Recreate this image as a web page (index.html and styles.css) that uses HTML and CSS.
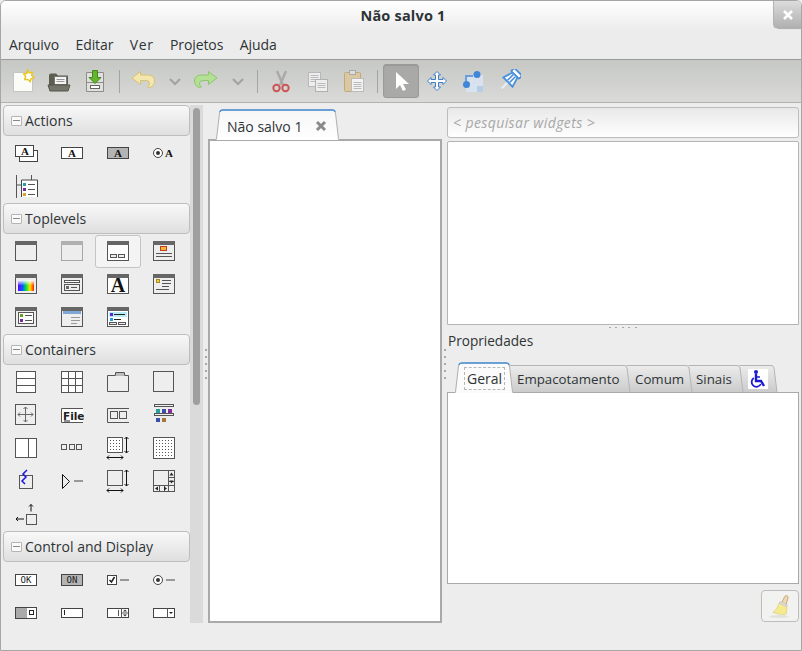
FILE: index.html
```html
<!DOCTYPE html>
<html lang="pt">
<head>
  <meta charset="UTF-8" />
  <title>Não salvo 1</title>
  <link rel="stylesheet" href="styles.css">
</head>
<body>
<div class="window">
  <div class="titlebar">
    <span class="title">Não salvo 1</span>
    <span class="win-close">
      <svg width="12" height="12" viewBox="0 0 12 12"><path d="M2 2l8 8M10 2l-8 8" class="x-white"/></svg>
    </span>
  </div>
  <div class="menubar">
    <span>Arquivo</span><span>Editar</span><span>Ver</span><span>Projetos</span><span>Ajuda</span>
  </div>

  <div class="toolbar">
    <span class="tool"><svg width="24" height="24"><path d="M2.500 3.500h15l4 4v15h-19z" fill="#fbfbf8" stroke="#c4c4c0"/><path d="M16.500 1l1.600 2.800 3.200-.4-.6 3.100 2.300 2-2.900 1.200-1 3-2.200-2.300-3.100.1.800-3-1.800-2.600 3.200-.6z" fill="#fff" stroke="#e8c820" stroke-width="1.500"/></svg></span>
    <span class="tool"><svg width="24" height="24"><path d="M2 6.500q0-2 2-2h5l2 2h10v13h-19z" fill="#5d5d50"/><rect x="7.500" y="7.500" width="12" height="8" fill="#f4f4f0" stroke="#777"/><path d="M9.500 10.500h8M9.500 12.500h8" stroke="#999"/><path d="M1 16h22l-2 6h-18z" fill="#74746a" stroke="#55554a"/></svg></span>
    <span class="tool"><svg width="24" height="24"><path d="M3.500 3.500h17v19h-17z" fill="#e0e0dc" stroke="#8c8c88"/><path d="M3.500 13.500h17" stroke="#8c8c88"/><rect x="7.500" y="16.500" width="9" height="3" fill="#fff" stroke="#666"/><path d="M9.500 1.500h5v7h3.500l-6 6-6-6h3.500z" fill="#66b530" stroke="#3f8a18"/></svg></span>
    <i class="sep"></i>
    <span class="tool"><svg width="24" height="24"><path d="M9.500 2.500l-8.500 6.500 8.500 6.500v-4h5.500q3.500 0 3.500 3 0 2-2 3.500l2 .5q5-1.500 5-6.500 0-6-7.500-6h-6.500z" fill="#f3e6ae" stroke="#d8c26e"/></svg></span>
    <span class="tool tool-small"><svg width="14" height="9"><path d="M2 2l5 5 5-5" class="chev"/></svg></span>
    <span class="tool"><svg width="24" height="24"><path d="M14.500 2.500l8.500 6.500-8.500 6.500v-4h-5.500q-3.500 0-3.500 3 0 2 2 3.500l-2 .5q-5-1.500-5-6.500 0-6 7.500-6h6.500z" fill="#b4e096" stroke="#8cc66c"/></svg></span>
    <span class="tool tool-small"><svg width="14" height="9"><path d="M2 2l5 5 5-5" class="chev"/></svg></span>
    <i class="sep"></i>
    <span class="tool"><svg width="24" height="24"><path d="M8 2l6 14M17 2l-6 14" stroke="#aaa" stroke-width="2.500" fill="none"/><circle cx="7.500" cy="19" r="3.200" fill="none" stroke="#cc5555" stroke-width="2"/><circle cx="16.500" cy="19" r="3.200" fill="none" stroke="#cc5555" stroke-width="2"/></svg></span>
    <span class="tool"><svg width="24" height="24"><rect x="3.500" y="3.500" width="12" height="14" fill="#eee" stroke="#b8b8b8"/><path d="M5.500 6.500h8M5.500 8.500h8M5.500 10.500h8M5.500 12.500h8" stroke="#bbb"/><rect x="10.500" y="10.500" width="12" height="12" fill="#eee" stroke="#b0b0b0"/><path d="M12.500 14.500h8M12.500 16.500h8M12.500 18.500h8" stroke="#bbb"/></svg></span>
    <span class="tool"><svg width="24" height="24"><rect x="3.500" y="3.500" width="16" height="19" rx="1" fill="#dcc8a0" stroke="#c4a878"/><rect x="8.500" y="1.500" width="6" height="4" fill="#ddd" stroke="#aaa"/><rect x="10.500" y="9.500" width="12" height="13" fill="#f2f2f2" stroke="#bbb"/><path d="M12.500 13.500h8M12.500 15.500h8M12.500 17.500h8M12.500 19.500h8" stroke="#bbb"/></svg></span>
    <i class="sep"></i>
    <span class="tool tool-on"><svg width="24" height="24"><path d="M7 3v17l4-4 3 6 3-1.500-3-5.500h6z" fill="#fff"/></svg></span>
    <span class="tool"><svg width="24" height="24"><path d="M12 2.500l3.500 3.500h-2v4.500h4.500v-2l3.500 3.500-3.500 3.500v-2h-4.500v4.500h2l-3.500 3.500-3.500-3.500h2v-4.500h-4.500v2l-3.500-3.500 3.500-3.500v2h4.500v-4.500h-2z" fill="#fff" stroke="#3f7fc8"/></svg></span>
    <span class="tool"><svg width="24" height="24"><rect x="5" y="6" width="17" height="17" fill="#d8e2ee"/><rect x="16" y="17" width="6" height="6" fill="#b6cde6"/><path d="M5 12v-5h7" fill="none" stroke="#6a9fdc" stroke-width="2"/><circle cx="16" cy="5.500" r="3.500" fill="#3f86d8"/><circle cx="5.500" cy="15.500" r="3.500" fill="#3f86d8"/></svg></span>
    <span class="tool"><svg width="24" height="24"><g transform="rotate(45 12 12)"><rect x="6.500" y="-1" width="11" height="4.500" rx="1" fill="#fff" stroke="#4a90dc" stroke-width="1.800"/><path d="M8.500 3.500h7l3 10h-13z" fill="#fff" stroke="#4a90dc" stroke-width="1.800"/><path d="M10.500 4.500v8M13.500 4.500v8" stroke="#4a90dc" stroke-width="1.600"/><path d="M12 14.500v8" stroke="#e6eef6" stroke-width="2"/></g></svg></span>
  </div>

  <div class="main">
    <div class="palette">
      <div class="palette-list">

        <div class="group-head"><b class="expander"></b>Actions</div>
        <div class="icons">
          <span><svg width="24" height="24"><rect x="5.500" y="9.500" width="18" height="11" class="box"/><rect x="1.500" y="4.500" width="18" height="11" class="box"/><text x="7" y="14" class="glyph">A</text></svg></span>
          <span><svg width="24" height="24"><rect x="1.500" y="6.500" width="21" height="11" class="box"/><text x="8" y="16" class="glyph">A</text></svg></span>
          <span><svg width="24" height="24"><rect x="1.500" y="6.500" width="21" height="11" class="box grey"/><text x="8" y="16" class="glyph">A</text></svg></span>
          <span><svg width="24" height="24"><circle cx="6" cy="12" r="4.500" class="box"/><circle cx="6" cy="12" r="2" fill="#333"/><text x="13" y="16" class="glyph">A</text></svg></span>
          <span><svg width="24" height="24"><path d="M2.500 1v23M2.500 11h5M17.500 1v5" class="line"/><path d="M7.500 23v-17h16v17" class="box"/><rect x="9" y="9" width="3" height="3" fill="#2a9d9d"/><rect x="9" y="14" width="3" height="3" fill="#7a2aa0"/><rect x="9" y="19" width="3" height="3" fill="#e0a020"/><path d="M14 10.500h7M14 15.500h7M14 20.500h7" class="line"/></svg></span>
        </div>

        <div class="group-head"><b class="expander"></b>Toplevels</div>
        <div class="icons">
          <span><svg width="24" height="24"><rect x="1.500" y="2.500" width="21" height="19" class="win"/><rect x="1" y="2" width="22" height="4" class="bar"/></svg></span>
          <span class="faded"><svg width="24" height="24"><rect x="1.500" y="2.500" width="21" height="19" class="win"/><rect x="1" y="2" width="22" height="4" class="bar"/></svg></span>
          <span class="picked"><svg width="24" height="24"><rect x="1.500" y="2.500" width="21" height="19" class="win white"/><rect x="1" y="2" width="22" height="4" class="bar"/><rect x="4.500" y="15.500" width="6" height="3" class="win"/><rect x="12.500" y="15.500" width="6" height="3" class="win"/></svg></span>
          <span><svg width="24" height="24"><rect x="1.500" y="2.500" width="21" height="19" class="win"/><rect x="1" y="2" width="22" height="4" class="bar"/><rect x="8.500" y="7.500" width="6" height="4" fill="#f2b632" stroke="#c23b22"/><path d="M4 14.500h16M4 17.500h16" class="line"/></svg></span>
          <span><svg width="24" height="24"><defs><linearGradient id="hue"><stop offset="0" stop-color="#6600ff"/><stop offset=".3" stop-color="#0060ff"/><stop offset=".5" stop-color="#00e040"/><stop offset=".75" stop-color="#ffe000"/><stop offset="1" stop-color="#ff2000"/></linearGradient><linearGradient id="fade" x2="0" y2="1"><stop offset="0" stop-color="#fff"/><stop offset=".5" stop-color="#fff" stop-opacity="0"/></linearGradient></defs><rect x="1.500" y="2.500" width="21" height="19" class="win"/><rect x="1" y="2" width="22" height="4" class="bar"/><rect x="4" y="8" width="16" height="11" fill="url(#hue)"/><rect x="4" y="8" width="16" height="11" fill="url(#fade)"/></svg></span>
          <span><svg width="24" height="24"><rect x="1.500" y="2.500" width="21" height="19" class="win"/><rect x="1" y="2" width="22" height="4" class="bar"/><rect x="4.500" y="8.500" width="15" height="2" class="win white"/><rect x="4.500" y="12.500" width="15" height="6" class="win"/><rect x="6" y="14" width="3" height="3" fill="#666"/><path d="M11 15.500h6" class="line"/></svg></span>
          <span><svg width="24" height="24"><rect x="1.500" y="2.500" width="21" height="19" class="win white"/><rect x="1" y="2" width="22" height="4" class="bar"/><text x="12" y="20" class="glyph big">A</text></svg></span>
          <span><svg width="24" height="24"><rect x="1.500" y="2.500" width="21" height="19" class="win"/><rect x="1" y="2" width="22" height="4" class="bar"/><rect x="4.500" y="7.500" width="3" height="3" fill="#f2d232" stroke="#a88820"/><path d="M10 8.500h9M10 11.500h9M10 14.500h7M4 17.500h13" class="line"/></svg></span>
          <span><svg width="24" height="24"><rect x="1.500" y="2.500" width="21" height="19" class="win"/><rect x="1" y="2" width="22" height="4" class="bar"/><rect x="4.500" y="7.500" width="15" height="11" class="win white"/><rect x="6" y="9" width="3" height="3" fill="#6aa020"/><rect x="6" y="14" width="3" height="3" fill="#7a2aa0"/><path d="M11 10.500h7M11 15.500h7" class="line"/></svg></span>
          <span><svg width="24" height="24"><rect x="1.500" y="2.500" width="21" height="19" class="win"/><rect x="1" y="2" width="22" height="4" class="bar"/><rect x="3" y="6" width="18" height="3" fill="#7fa6d6"/><path d="M11 12.500h9M11 15.500h9M11 18.500h6" stroke="#999"/></svg></span>
          <span><svg width="24" height="24"><rect x="1.500" y="2.500" width="21" height="19" class="win white"/><rect x="1" y="2" width="22" height="4" class="bar"/><rect x="3" y="7" width="18" height="5" fill="#b8ecf4"/><rect x="4" y="8" width="3" height="3" fill="#5a2ad0"/><rect x="4" y="13" width="3" height="3" fill="#20a0e0"/><path d="M8 9.500h11M8 14.500h7" stroke="#222"/><rect x="3.500" y="17.500" width="7" height="2" class="win"/><rect x="12.500" y="17.500" width="7" height="2" class="win"/></svg></span>
        </div>

        <div class="group-head"><b class="expander"></b>Containers</div>
        <div class="icons">
          <span><svg width="24" height="24"><rect x="2.500" y="1.500" width="19" height="21" class="win white"/><path d="M2 8.500h20M2 15.500h20" class="frame"/></svg></span>
          <span><svg width="24" height="24"><rect x="1.500" y="1.500" width="21" height="21" class="win white"/><path d="M1 8.500h22M1 15.500h22M8.500 1v22M15.500 1v22" class="frame"/></svg></span>
          <span><svg width="24" height="24"><path d="M1.500 21.500v-16h8v-3h9v3h4v16z" class="win"/><rect x="10" y="3" width="8" height="3" fill="#bbb"/></svg></span>
          <span><svg width="24" height="24"><rect x="1.500" y="1.500" width="20" height="20" class="win"/></svg></span>

          <span><svg width="24" height="24"><rect x="1.500" y="1.500" width="20" height="20" class="win"/><path d="M11.500 4v15M4 11.500h15M11.500 4l-2 2M11.500 4l2 2M11.500 19l-2-2M11.500 19l2-2M4 11.500l2-2M4 11.500l2 2M19 11.500l-2-2M19 11.500l-2 2" stroke="#666" fill="none"/></svg></span>
          <span><svg width="24" height="24"><path d="M23 5.500h-21.500v14h21.500" class="win white"/><text x="3" y="16.500" class="file">File</text><path d="M4 18h6" stroke="#222"/></svg></span>
          <span><svg width="24" height="24"><path d="M23 5.500h-21.500v14h21.500" class="win"/><rect x="4.500" y="8.500" width="7" height="7" class="win"/><rect x="13.500" y="8.500" width="7" height="7" class="win"/></svg></span>
          <span><svg width="24" height="24"><rect x="2.500" y="1.500" width="19" height="2" class="win"/><rect x="2.500" y="10.500" width="19" height="2" class="win"/><rect x="4" y="6" width="4" height="4" fill="#2a9d9d"/><rect x="10" y="6" width="4" height="4" fill="#3a50a8"/><rect x="16" y="6" width="4" height="4" fill="#8a2aa0"/><rect x="4" y="15" width="4" height="4" fill="#3a50a8"/><rect x="10" y="15" width="4" height="4" fill="#a07840"/></svg></span>

          <span><svg width="24" height="24"><rect x="1.500" y="2.500" width="21" height="19" class="win white"/><path d="M14.500 2v20" class="frame"/></svg></span>
          <span><svg width="24" height="24"><rect x="1.500" y="8.500" width="5" height="5" class="win"/><rect x="9.500" y="8.500" width="5" height="5" class="win"/><rect x="16.500" y="8.500" width="5" height="5" class="win"/></svg></span>
          <span><svg width="24" height="24"><rect x="1.500" y="1.500" width="15" height="15" class="win white"/><path d="M4 4.500h11M4 7.500h11M4 10.500h11M4 13.500h11" class="dots"/><path d="M20.500 1v16M20.500 1l-2 2M20.500 1l2 2M20.500 17l-2-2M20.500 17l2-2M1 21.500h16M1 21.500l2-2M1 21.500l2 2M17 21.500l-2-2M17 21.500l-2 2" class="arrow"/></svg></span>
          <span><svg width="24" height="24"><rect x="1.500" y="1.500" width="21" height="21" class="win white"/><path d="M4 4.500h17M4 7.500h17M4 10.500h17M4 13.500h17M4 16.500h17M4 19.500h17" class="dots"/></svg></span>

          <span><svg width="24" height="24"><rect x="5.500" y="6.500" width="13" height="13" class="win"/><path d="M13 1l-4 4 3 3-4 4 3 3" stroke="#1818e0" stroke-width="1.500" fill="none"/></svg></span>
          <span><svg width="24" height="24"><path d="M2.500 5.500l7 7-7 7z" class="arrow" fill="#fff"/><rect x="14" y="11" width="9" height="2" fill="#999"/></svg></span>
          <span><svg width="24" height="24"><rect x="1.500" y="1.500" width="15" height="15" class="win"/><path d="M20.500 1v16M20.500 1l-2 2M20.500 1l2 2M20.500 17l-2-2M20.500 17l2-2M1 21.500h16M1 21.500l2-2M1 21.500l2 2M17 21.500l-2-2M17 21.500l-2 2" class="arrow"/></svg></span>
          <span><svg width="24" height="24"><rect x="1.500" y="1.500" width="21" height="21" class="win"/><path d="M16.500 1v22M1 16.500h22M16.500 8.500h6M16.500 12.500h6M7.500 16.500v6M12.500 16.500v6" class="frame"/><path d="M19.500 3.500l-2 3h4zM19.500 14.500l-2-3h4zM3 19.500l3-2v4zM15 19.500l-3-2v4z" fill="#222"/></svg></span>

          <span><svg width="24" height="24"><rect x="12.500" y="12.500" width="10" height="10" class="win"/><path d="M17 9.500v-7M17 2.500l-2 2M17 2.500l2 2M10 17h-8M2 17l2-2M2 17l2 2" class="arrow"/></svg></span>
        </div>

        <div class="group-head"><b class="expander"></b>Control and Display</div>
        <div class="icons">
          <span><svg width="24" height="24"><rect x="1.500" y="7.500" width="21" height="11" class="box"/><text x="12" y="16" class="mono">OK</text></svg></span>
          <span><svg width="24" height="24"><rect x="1.500" y="7.500" width="21" height="11" class="box grey"/><text x="12" y="16" class="mono">ON</text></svg></span>
          <span><svg width="24" height="24"><rect x="1.500" y="8.500" width="9" height="9" class="box"/><path d="M3.500 13l2 2 3-5" stroke="#222" stroke-width="1.500" fill="none"/><rect x="14" y="12" width="9" height="2" fill="#999"/></svg></span>
          <span><svg width="24" height="24"><circle cx="6" cy="13" r="4.500" class="box"/><circle cx="6" cy="13" r="2" fill="#333"/><rect x="14" y="12" width="9" height="2" fill="#999"/></svg></span>

          <span><svg width="24" height="24"><rect x="1.500" y="7.500" width="21" height="11" class="box"/><rect x="2" y="8" width="11" height="10" fill="#aaa"/><rect x="15.500" y="10.500" width="4" height="4" fill="none" stroke="#222"/></svg></span>
          <span><svg width="24" height="24"><rect x="1.500" y="8.500" width="21" height="9" class="box"/><path d="M4.500 10v5" stroke="#222"/></svg></span>
          <span><svg width="24" height="24"><rect x="1.500" y="8.500" width="21" height="9" class="box"/><path d="M12.500 10v6M15.500 8v10M15.500 13h7" class="frame"/><path d="M19 9.500l-2 2h4zM19 16.500l-2-2h4z" fill="#333"/></svg></span>
          <span><svg width="24" height="24"><rect x="1.500" y="8.500" width="21" height="9" class="box"/><path d="M15.500 8v10" class="frame"/><path d="M17 12h4l-2 2z" fill="#222"/></svg></span>
        </div>
      </div>
      <div class="scrollbar"><i></i></div>
    </div>

    <div class="grip-col"><i class="grip"></i></div>

    <div class="editor">
      <div class="doc-tabs">
        <span class="doc-tab">
          <svg class="tab-shape" width="123" height="31"><defs><linearGradient id="tabOn" x2="0" y2="1"><stop offset="0" stop-color="#f6f6f6"/><stop offset="1" stop-color="#fff"/></linearGradient></defs><path d="M.5 31l3-27q.3-3 3-3h110q2.700 0 3 3l3 27" fill="url(#tabOn)"/><path d="M.5 30l3-26q.3-3 3-3h110q2.700 0 3 3l3 26" fill="none" stroke="#b0b0b0"/><path d="M4 3q.3-2 2.500-2h110q2.200 0 2.500 2" fill="none" stroke="#4a90d9" stroke-width="1.500"/></svg>
          <span class="tab-label">Não salvo 1</span>
          <svg class="tab-x" width="12" height="12" viewBox="0 0 12 12"><path d="M2 2l8 8M10 2l-8 8" stroke="#8a8a8a" stroke-width="3"/></svg>
        </span>
      </div>
      <div class="canvas"></div>
    </div>

    <div class="grip-col"><i class="grip"></i></div>

    <div class="side">
      <div class="search">&lt; pesquisar widgets &gt;</div>
      <div class="tree"></div>
      <div class="grip-row"><i></i></div>
      <div class="props-label">Propriedades</div>
      <div class="prop-tabs">
        <span class="prop-tab prop-tab-on geral">
          <svg class="tab-shape" width="58" height="31"><path d="M.5 31l3-27q.4-3 3-3h45q2.600 0 3 3l3 27" fill="#fbfbfb"/><path d="M.5 30l3-26q.4-3 3-3h45q2.600 0 3 3l3 26" fill="none" stroke="#b0b0b0"/><path d="M4 3q.4-2 2.500-2h45q2.100 0 2.500 2" fill="none" stroke="#4a90d9" stroke-width="1.500"/></svg>
          <span class="tab-label focus">Geral</span>
        </span>
        <span class="prop-tab empacotamento">
          <svg class="tab-shape" width="117" height="27"><defs><linearGradient id="tabOff" x2="0" y2="1"><stop offset="0" stop-color="#ececec"/><stop offset="1" stop-color="#cbcbcb"/></linearGradient></defs><path d="M-3.500 .5h114.500q2.500 0 3 2.500l3 24h-117z" fill="url(#tabOff)"/><path d="M-3.500 .5h114.500q2.500 0 3 2.500l3 24" fill="none" stroke="#b4b4b4"/></svg>
          <span class="tab-label">Empacotamento</span>
        </span>
        <span class="prop-tab comum">
          <svg class="tab-shape" width="62" height="27"><path d="M-3.500 .5h59.500q2.500 0 3 2.500l3 24h-62z" fill="url(#tabOff)"/><path d="M-3.500 .5h59.500q2.500 0 3 2.500l3 24" fill="none" stroke="#b4b4b4"/></svg>
          <span class="tab-label">Comum</span>
        </span>
        <span class="prop-tab sinais">
          <svg class="tab-shape" width="51" height="27"><path d="M-3.500 .5h48.500q2.500 0 3 2.500l3 24h-51z" fill="url(#tabOff)"/><path d="M-3.500 .5h48.500q2.500 0 3 2.500l3 24" fill="none" stroke="#b4b4b4"/></svg>
          <span class="tab-label">Sinais</span>
        </span>
        <span class="prop-tab access">
          <svg class="tab-shape" width="34" height="27"><path d="M-3.500 .5h31.500q2.500 0 3 2.500l3 24h-34z" fill="url(#tabOff)"/><path d="M-3.500 .5h31.500q2.500 0 3 2.500l3 24" fill="none" stroke="#b4b4b4"/></svg>
          <svg class="a11y" width="20" height="20"><rect width="20" height="20" fill="#fff"/><circle cx="8" cy="3" r="2" fill="#1a1ad0"/><path d="M8 5v7h5l3 5" fill="none" stroke="#1a1ad0" stroke-width="2.400"/><path d="M5.800 9a4.800 4.800 0 1 0 7 6" fill="none" stroke="#1a1ad0" stroke-width="1.800"/><path d="M8 8h4" stroke="#1a1ad0" stroke-width="1.500"/></svg>
        </span>
      </div>
      <div class="prop-panel"></div>
      <div class="clear-row">
        <span class="clear-btn"><svg width="28" height="28"><ellipse cx="13" cy="24.500" rx="10" ry="1.500" fill="#e2e2dc"/><path d="M15 12l3.500-7q1-2 2.500-1.300t1 2.500l-2.500 7.500z" fill="#ecd9b8" stroke="#c8a87c"/><path d="M13.500 10.500l7 3.500q1 3-.5 8-1.500 1-3 .3l-1 .5-1-1-1.500 .8-1-1-1.500 .4-1-1-3-.4q4-3 6.500-10z" fill="#f6ea8e" stroke="#ddd17a" stroke-width=".8"/><path d="M14 9.500l7.500 3.500-.7 1.800-7.700-3.500z" fill="#ddd" stroke="#bbb" stroke-width=".5"/></svg></span>
      </div>
    </div>
  </div>
</div>
</body>
</html>
```
FILE: styles.css
```css
html, body {
  margin: 0;
  padding: 0;
}
body {
  font-family: "Open Sans", "Noto Sans", sans-serif;
  font-size: 14px;
  color: #2e3436;
  background: #ededed;
}
svg {
  display: block;
}

.window {
  box-sizing: border-box;
  width: 802px;
  height: 651px;
  display: flex;
  flex-direction: column;
  border: 1px solid #a6a6a6;
  border-radius: 6px 6px 0 0;
  background: #ededed;
  overflow: hidden;
}

.titlebar {
  position: relative;
  height: 29px;
  flex: none;
  display: flex;
  justify-content: center;
  align-items: center;
  padding-left: 4px;
  background: linear-gradient(#ffffff, #ececec);
}
.title {
  font-weight: 700;
  font-size: 14.5px;
  letter-spacing: 0.2px;
}
.win-close {
  position: absolute;
  top: 0;
  right: 0;
  width: 27px;
  height: 28px;
  display: flex;
  justify-content: center;
  align-items: center;
  background: linear-gradient(#dcdcdc, #aeaeae);
  border-left: 1px solid #b4b4b4;
  border-bottom: 1px solid #e8e8e8;
  border-radius: 0 0 0 6px;
}
.x-white {
  stroke: #fff;
  stroke-width: 2.500;
}

.menubar {
  height: 29px;
  flex: none;
  display: flex;
  align-items: center;
  gap: 16.500px;
  padding-left: 8px;
  letter-spacing: -0.1px;
  background: #ececec;
}
.menubar span:nth-child(3) {
  letter-spacing: 0.6px;
}

.toolbar {
  box-sizing: border-box;
  height: 44px;
  flex: none;
  display: flex;
  align-items: center;
  padding-left: 4px;
  border-top: 1px solid #999;
  border-bottom: 1px solid #b2b2b2;
  background: linear-gradient(#c6c8c4, #dadad8);
}
.tool {
  box-sizing: border-box;
  width: 36px;
  height: 34px;
  flex: none;
  display: flex;
  justify-content: center;
  align-items: center;
}
.tool-small {
  width: 27px;
  padding-top: 1px;
}
.tool-on {
  background: #a9aaa8;
  border: 1px solid #9a9b99;
  border-radius: 3px;
  box-shadow: inset 0 1px 1px rgba(0, 0, 0, 0.1);
}
.chev {
  fill: none;
  stroke: #a2a3a0;
  stroke-width: 2;
}
.sep {
  width: 1px;
  height: 23px;
  flex: none;
  margin: 0 5px 0 6px;
  background: #a4a5a2;
}

.main {
  flex: 1;
  min-height: 0;
  display: flex;
  padding: 2px 2px 27px 2px;
}

.palette {
  width: 200px;
  flex: none;
  display: flex;
  overflow: hidden;
}
.palette-list {
  width: 187px;
  flex: none;
}
.scrollbar {
  width: 13px;
  flex: none;
  background: #dadada;
  padding: 3px 3px 0;
  box-sizing: border-box;
}
.scrollbar i {
  display: block;
  width: 7px;
  height: 297px;
  border-radius: 4px;
  background: #9f9f9f;
}
.group-head {
  box-sizing: border-box;
  height: 31px;
  margin-bottom: 1px;
  display: flex;
  align-items: center;
  padding-left: 7px;
  border: 1px solid #bdbdbd;
  border-radius: 4px;
  background: linear-gradient(#f8f8f8, #dfdfdf);
}
.expander {
  box-sizing: border-box;
  width: 11px;
  height: 10px;
  margin-right: 3px;
  position: relative;
  border: 1px solid #b4b4b4;
  border-radius: 1px;
  background: #fafafa;
}
.expander::after {
  content: "";
  position: absolute;
  left: 1px;
  right: 1px;
  top: 3px;
  height: 1px;
  background: #888;
}
.icons {
  display: grid;
  grid-template-columns: repeat(4, 46px);
  grid-auto-rows: 33px;
}
.icons > span {
  box-sizing: border-box;
  padding: 4px 11px 5px;
}
.icons > .picked {
  padding: 3px 10px 4px;
  border: 1px solid #c4c4c4;
  border-radius: 3px;
  background: #f4f4f4;
}
.icons > .faded {
  opacity: 0.45;
}

/* palette icon parts */
.box {
  fill: #fff;
  stroke: #444;
}
.box.grey {
  fill: #b4b4b4;
}
.win {
  fill: #eeeeee;
  stroke: #555;
}
.win.white {
  fill: #fff;
}
.bar {
  fill: #666;
}
.frame {
  fill: none;
  stroke: #555;
}
.line {
  fill: none;
  stroke: #555;
}
.arrow {
  fill: none;
  stroke: #111;
}
.dots {
  fill: none;
  stroke: #555;
  stroke-dasharray: 1 2;
}
.glyph {
  font-family: "Liberation Serif", serif;
  font-weight: 700;
  font-size: 11px;
  fill: #111;
}
.glyph.big {
  font-size: 20px;
  text-anchor: middle;
}
.file {
  font-family: "DejaVu Sans", sans-serif;
  font-weight: 700;
  font-size: 10.500px;
  fill: #222;
}
.mono {
  font-family: "DejaVu Sans Mono", monospace;
  font-size: 9px;
  text-anchor: middle;
  fill: #222;
}

.grip-col {
  width: 5px;
  flex: none;
  display: flex;
  align-items: center;
  justify-content: center;
}
.grip {
  display: block;
  width: 2px;
  height: 30px;
  background: repeating-linear-gradient(#a8a8a8 0 2px, transparent 2px 7px);
}

.editor {
  width: 234px;
  flex: none;
  display: flex;
  flex-direction: column;
}
.doc-tabs {
  height: 30px;
  margin-top: 4px;
  padding-left: 8px;
  flex: none;
  display: flex;
}
.doc-tab {
  position: relative;
  width: 123px;
  height: 31px;
  display: flex;
  align-items: center;
  padding: 3px 0 0 11px;
  box-sizing: border-box;
}
.tab-shape {
  position: absolute;
  left: 0;
  bottom: 0;
  overflow: visible;
}
.tab-label {
  position: relative;
}
.tab-x {
  position: absolute;
  left: 99px;
  top: 11px;
}
.canvas {
  flex: 1;
  border: 2px solid #a9a9a9;
  background: #fff;
}

.side {
  width: 352px;
  flex: none;
  display: flex;
  flex-direction: column;
}
.search {
  box-sizing: border-box;
  height: 31px;
  margin-top: 2px;
  display: flex;
  align-items: center;
  padding-left: 5px;
  border: 1px solid #bcbcbc;
  border-radius: 3px;
  font-style: italic;
  letter-spacing: 0.4px;
  color: #a8a8a8;
  background: linear-gradient(#e8e8e8, #fff);
}
.tree {
  box-sizing: border-box;
  height: 184px;
  margin-top: 3px;
  border: 1px solid #b4b4b4;
  border-radius: 2px 2px 0 0;
  background: #fff;
}
.grip-row {
  height: 5px;
  display: flex;
  justify-content: center;
  align-items: center;
}
.grip-row i {
  display: block;
  width: 28px;
  height: 1px;
  background: repeating-linear-gradient(90deg, #a8a8a8 0 2px, transparent 2px 6.500px);
}
.props-label {
  height: 22px;
  line-height: 22px;
  padding-left: 1px;
  font-size: 13.600px;
}
.prop-tabs {
  height: 30px;
  margin-top: 10px;
  padding-left: 8px;
  display: flex;
  align-items: flex-end;
  font-size: 13.300px;
}
.prop-tab {
  position: relative;
  height: 27px;
  display: flex;
  align-items: center;
  flex: none;
}
.prop-tab-on {
  height: 31px;
  margin-bottom: -1px;
  padding-top: 2px;
  box-sizing: border-box;
  font-size: 14px;
}
.geral { width: 58px; padding-left: 9px; z-index: 5; }
.empacotamento { width: 117px; padding-left: 4px; box-sizing: border-box; z-index: 4; }
.comum { width: 62px; padding-left: 5px; box-sizing: border-box; z-index: 3; }
.sinais { width: 51px; padding-left: 4px; box-sizing: border-box; z-index: 2; }
.access { width: 34px; padding-left: 5px; box-sizing: border-box; z-index: 1; }
.focus {
  padding: 1px 2px;
  border: 1px dashed #b8b8b8;
}
.a11y {
  position: relative;
}
.prop-panel {
  box-sizing: border-box;
  height: 192px;
  border: 1px solid #a9a9a9;
  background: #fff;
}
.clear-row {
  display: flex;
  justify-content: flex-end;
  margin-top: 6px;
}
.clear-btn {
  box-sizing: border-box;
  width: 38px;
  height: 32px;
  display: flex;
  align-items: center;
  justify-content: center;
  border: 1px solid #bdbdbd;
  border-radius: 4px;
  background: #f2f2f0;
}
```
